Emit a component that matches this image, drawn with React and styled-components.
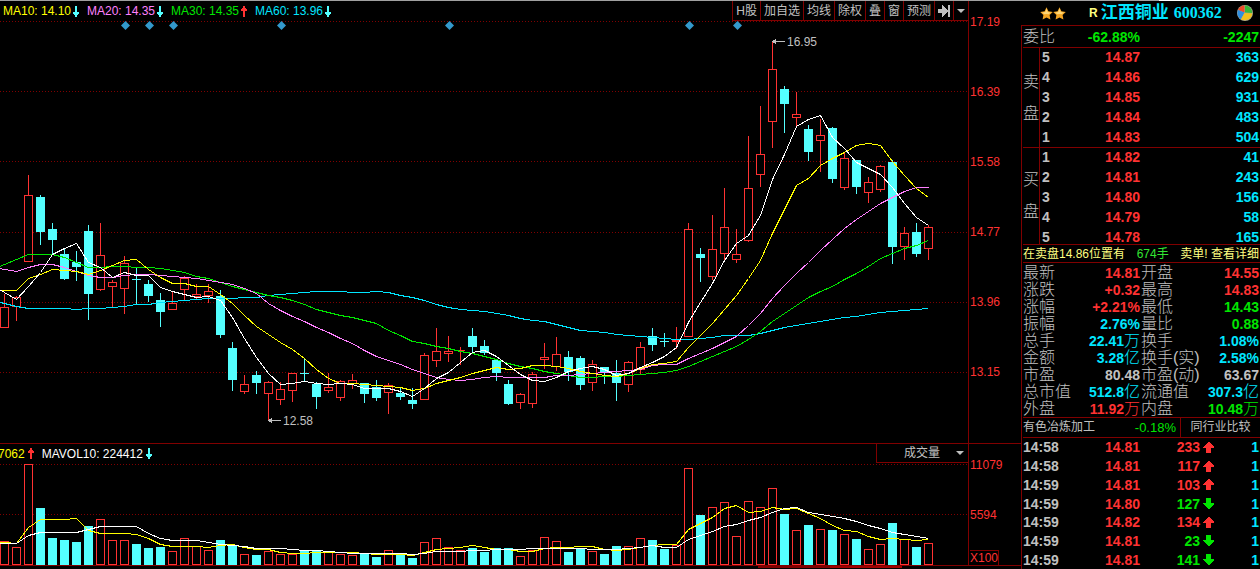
import { useState } from 'react';
import styled, { createGlobalStyle } from 'styled-components';

const colors = {
	red: '#ff3232',
	green: '#00e600',
	cyan: '#00e6ff',
	candle: '#54ffff',
	yellow: '#ffff00',
	pale: '#ffff80',
	pink: '#ff80ff',
	grey: '#c0c0c0',
	white: '#ffffff',
	line: '#800000',
};

// kind (r = rise, f = fall), high, body top, body bottom, low
const candles = [
	['r', 294, 307, 327, 327], ['r', 296, 297, 306, 320], ['r', 175, 195, 261, 261], ['f', 195, 197, 231, 244],
	['f', 223, 229, 239, 253], ['f', 249, 254, 278, 279], ['f', 251, 262, 266, 280], ['f', 225, 231, 293, 319],
	['r', 223, 255, 289, 290], ['r', 280, 282, 286, 306], ['r', 256, 263, 288, 313], ['f', 267, 279, 279, 303],
	['f', 280, 284, 295, 301], ['f', 293, 300, 311, 326], ['r', 292, 303, 309, 309], ['r', 276, 278, 289, 299],
	['r', 284, 294, 296, 298], ['r', 284, 291, 295, 302], ['f', 290, 296, 334, 337], ['f', 342, 348, 379, 390],
	['r', 375, 384, 391, 393], ['f', 371, 375, 382, 393], ['r', 381, 382, 393, 419], ['r', 382, 389, 399, 404],
	['r', 373, 373, 390, 401], ['f', 358, 373, 373, 380], ['f', 382, 384, 396, 408], ['r', 373, 387, 390, 392],
	['r', 380, 381, 397, 400], ['r', 374, 380, 383, 388], ['f', 383, 383, 393, 402], ['f', 380, 387, 397, 400],
	['r', 383, 385, 392, 413], ['f', 388, 393, 396, 399], ['f', 388, 400, 403, 408], ['r', 353, 355, 399, 399],
	['r', 328, 351, 360, 366], ['r', 336, 351, 353, 361], ['r', 347, 350, 350, 364], ['f', 328, 336, 346, 351],
	['f', 340, 346, 352, 354], ['f', 360, 360, 372, 380], ['f', 380, 384, 403, 404], ['r', 393, 394, 402, 408],
	['r', 372, 374, 403, 407], ['r', 343, 357, 359, 368], ['r', 337, 354, 366, 370], ['f', 351, 357, 371, 380],
	['f', 356, 358, 384, 389], ['r', 360, 364, 382, 390], ['f', 367, 367, 372, 383], ['f', 360, 373, 382, 400],
	['r', 361, 362, 384, 391], ['r', 342, 347, 369, 374], ['f', 328, 336, 344, 350], ['f', 333, 341, 341, 346],
	['r', 327, 340, 341, 348], ['r', 223, 229, 336, 336], ['f', 248, 254, 257, 281], ['r', 215, 249, 276, 279],
	['r', 188, 227, 253, 259], ['r', 229, 254, 259, 262], ['r', 136, 188, 240, 241], ['r', 106, 154, 174, 186],
	['r', 41, 69, 121, 147], ['f', 86, 89, 103, 132], ['r', 92, 114, 117, 126], ['f', 125, 129, 151, 160],
	['r', 119, 135, 140, 171], ['f', 127, 128, 178, 182], ['r', 152, 158, 187, 189], ['f', 160, 160, 186, 193],
	['r', 177, 182, 192, 202], ['r', 165, 166, 189, 191], ['f', 160, 162, 246, 263], ['r', 227, 233, 246, 259],
	['f', 223, 232, 253, 256], ['r', 225, 227, 248, 259],
];

const volumes = [
	541, 547, 464, 508, 538, 540, 542, 526, 519, 540, 540, 544, 548, 547, 551, 538, 546, 550, 540, 545,
	554, 555, 551, 554, 554, 550, 550, 552, 554, 555, 554, 557, 550, 555, 558, 542, 538, 547, 550, 548,
	552, 548, 548, 556, 550, 537, 541, 552, 548, 551, 554, 546, 546, 538, 540, 549, 545, 468, 515, 507,
	502, 536, 501, 507, 488, 514, 530, 525, 529, 530, 534, 539, 549, 544, 523, 539, 547, 543,
];

const averages = [
	{
		color: colors.cyan,
		values: [
			303, 306, 308, 308, 308, 308, 309, 308, 308, 307, 306, 304, 304, 302, 301, 300, 299, 298, 298, 298,
			297, 297, 295, 294, 293, 292, 291, 291, 291, 292, 292, 291, 292, 295, 297, 300, 304, 307, 309, 310,
			311, 313, 315, 318, 320, 321, 324, 327, 330, 331, 332, 334, 335, 336, 337, 338, 339, 339, 338, 337,
			335, 335, 335, 333, 330, 327, 325, 323, 321, 319, 317, 316, 314, 312, 311, 310, 309, 308,
		],
	},
	{
		color: colors.green,
		values: [
			264, 259, 254, 254, 254, 257, 262, 267, 267, 266, 266, 267, 267, 268, 270, 272, 276, 278, 282, 286,
			289, 292, 295, 297, 300, 304, 309, 312, 315, 317, 320, 323, 330, 335, 341, 343, 346, 348, 351, 353,
			356, 359, 363, 366, 368, 371, 373, 375, 377, 377, 376, 376, 375, 374, 373, 372, 370, 366, 361, 356,
			351, 346, 339, 331, 321, 313, 305, 297, 291, 286, 279, 273, 266, 258, 253, 248, 245, 240,
		],
	},
	{
		color: colors.pink,
		values: [
			269, 271, 267, 264, 264, 267, 271, 275, 277, 277, 275, 274, 274, 275, 276, 277, 278, 280, 282, 284,
			288, 293, 303, 310, 316, 321, 327, 332, 338, 343, 350, 356, 360, 364, 369, 373, 377, 379, 380, 379,
			377, 376, 377, 377, 377, 377, 375, 375, 374, 373, 372, 371, 370, 369, 365, 364, 364, 358, 353, 348,
			342, 336, 325, 313, 298, 285, 273, 262, 250, 239, 228, 219, 211, 203, 197, 191, 187, 187,
		],
	},
	{
		color: colors.yellow,
		values: [
			290, 290, 278, 274, 269, 270, 271, 274, 270, 265, 260, 259, 269, 277, 283, 283, 286, 286, 294, 303,
			315, 326, 334, 342, 349, 358, 369, 378, 383, 383, 384, 385, 386, 387, 390, 388, 383, 380, 377, 373,
			370, 367, 369, 368, 365, 365, 366, 368, 371, 373, 375, 376, 373, 368, 364, 363, 361, 347, 335, 323,
			309, 295, 278, 260, 233, 209, 185, 178, 165, 158, 152, 145, 143, 145, 161, 175, 188, 197,
		],
	},
	{
		color: colors.white,
		values: [
			292, 299, 286, 272, 254, 248, 243, 262, 267, 277, 272, 275, 275, 287, 291, 294, 297, 296, 300, 317,
			338, 357, 373, 384, 383, 381, 383, 384, 383, 384, 388, 388, 388, 391, 396, 388, 378, 372, 362, 352,
			350, 356, 365, 374, 380, 381, 377, 371, 368, 366, 369, 375, 373, 367, 362, 356, 347, 322, 302, 283,
			260, 243, 235, 215, 179, 154, 126, 119, 115, 137, 148, 162, 168, 174, 187, 203, 217, 225,
		],
	},
];

const volumeAverages = [
	{
		color: colors.yellow,
		values: [
			542, 543, 527, 519, 519, 519, 518, 530, 533, 533, 533, 534, 538, 544, 546, 546, 546, 547, 545, 544,
			547, 549, 549, 552, 553, 553, 552, 552, 552, 552, 553, 554, 554, 554, 555, 552, 549, 548, 547, 545,
			547, 549, 549, 551, 551, 548, 547, 547, 546, 546, 549, 550, 549, 547, 545, 544, 544, 529, 523, 517,
			508, 505, 512, 511, 507, 509, 508, 513, 518, 525, 530, 531, 536, 539, 538, 539, 540, 539,
		],
	},
	{
		color: colors.white,
		values: [
			543, 543, 535, 532, 532, 532, 532, 529, 526, 526, 526, 526, 533, 538, 540, 540, 540, 542, 544, 545,
			546, 548, 548, 548, 549, 550, 550, 551, 552, 553, 553, 553, 553, 553, 554, 553, 551, 551, 551, 550,
			550, 549, 549, 549, 548, 548, 548, 548, 548, 549, 549, 549, 548, 547, 545, 547, 547, 539, 535, 531,
			526, 524, 520, 517, 512, 508, 507, 512, 514, 516, 518, 521, 525, 528, 532, 534, 536, 538,
		],
	},
];

const maLegend = [
	{ text: 'MA10: 14.10', color: colors.yellow, up: false },
	{ text: 'MA20: 14.35', color: colors.pink, up: false },
	{ text: 'MA30: 14.35', color: colors.green, up: true },
	{ text: 'MA60: 13.96', color: colors.cyan, up: false },
];

const tools = ['H股', '加自选', '均线', '除权', '叠', '窗', '预测'];

const sells = [['5', '14.87', '363'], ['4', '14.86', '629'], ['3', '14.85', '931'], ['2', '14.84', '483'], ['1', '14.83', '504']];
const buys = [['1', '14.82', '41'], ['2', '14.81', '243'], ['3', '14.80', '156'], ['4', '14.79', '58'], ['5', '14.78', '165']];

// label, value, unit, color, twice per row
const quotes = [
	['最新', '14.81', '', 'red', '开盘', '14.55', '', 'red'],
	['涨跌', '+0.32', '', 'red', '最高', '14.83', '', 'red'],
	['涨幅', '+2.21%', '', 'red', '最低', '14.43', '', 'green'],
	['振幅', '2.76%', '', 'cyan', '量比', '0.88', '', 'green'],
	['总手', '22.41', '万', 'cyan', '换手', '1.08%', '', 'cyan'],
	['金额', '3.28', '亿', 'cyan', '换手(实)', '2.58%', '', 'cyan'],
	['市盈', '80.48', '', 'grey', '市盈(动)', '63.67', '', 'grey'],
	['总市值', '512.8', '亿', 'cyan', '流通值', '307.3', '亿', 'cyan'],
	['外盘', '11.92', '万', 'red', '内盘', '10.48', '万', 'green'],
];

const trades = [
	['14:58', '14.81', '233', true],
	['14:58', '14.81', '117', true],
	['14:59', '14.81', '103', true],
	['14:59', '14.80', '127', false],
	['14:59', '14.82', '134', true],
	['14:59', '14.81', '23', false],
	['14:59', '14.81', '141', false],
];

const centerOf = (i) => 4 + i * 12;

function Trend({ up }) {
	return (
		<svg width='6' height='11' shapeRendering='crispEdges' fill={up ? colors.red : colors.candle}>
			<path d={up ? 'M2 0h2v2h1v1h1v2h-2v6h-2v-6h-2v-2h1v-1h1z' : 'M2 0h2v6h2v2h-1v1h-1v2h-2v-2h-1v-1h-1v-2h2z'} />
		</svg>
	);
}

function AverageLine({ color, values }) {
	const all = [2 * values[0] - values[1], ...values];
	const points = all.map((y, i) => `${centerOf(i - 1) + 0.5},${y + 0.5}`).join(' ');
	return <polyline points={points} fill='none' stroke={color} />;
}

function Bar({ x, top, bottom, kind }) {
	if (kind === 'f' || bottom - top < 2) {
		return <rect x={x - 4} y={top} width='9' height={bottom - top + 1} fill={kind === 'f' ? colors.candle : colors.red} />;
	}
	return <rect x={x - 3.5} y={top + 0.5} width='8' height={bottom - top} fill='#000' stroke={colors.red} />;
}

function PriceChart() {
	return (
		<Plot viewBox='0 21 968 422' preserveAspectRatio='xMaxYMin meet' shapeRendering='crispEdges'>
			{[21, 91, 161, 232, 302, 372].map((y) => (
				<path key={y} d={`M0 ${y + 0.5}H968`} stroke={colors.line} strokeDasharray='1 2' />
			))}
			{[125, 149, 173, 281, 449, 689, 737].map((x) => (
				<path key={x} d={`M${x + 0.5} 21l4.5 4.5l-4.5 4.5l-4.5 -4.5z`} fill='#3399cc' shapeRendering='auto' />
			))}
			{candles.map(([kind, high, top, bottom, low], i) => (
				<g key={i}>
					<rect x={centerOf(i)} y={high} width='1' height={low - high + 1} fill={kind === 'f' ? colors.candle : colors.red} />
					<Bar x={centerOf(i)} top={top} bottom={bottom} kind={kind} />
				</g>
			))}
			{averages.map((line) => (
				<AverageLine key={line.color} {...line} />
			))}
			<g fill={colors.grey}>
				<path d='M772 41h1v-1h2v-1h1v2h9v1h-9v2h-1v-1h-2v-1h-1z' />
				<text x='787' y='46'>16.95</text>
				<path d='M268 420h1v-1h2v-1h1v2h9v1h-9v2h-1v-1h-2v-1h-1z' />
				<text x='283' y='425'>12.58</text>
			</g>
		</Plot>
	);
}

function VolumeChart() {
	return (
		<Plot viewBox='0 463 968 102' preserveAspectRatio='xMaxYMin meet' shapeRendering='crispEdges'>
			{[464, 514].map((y) => (
				<path key={y} d={`M0 ${y + 0.5}H968`} stroke={colors.line} strokeDasharray='1 2' />
			))}
			{volumes.map((top, i) => (
				<Bar key={i} x={centerOf(i)} top={top} bottom={564} kind={candles[i][0]} />
			))}
			{volumeAverages.map((line) => (
				<AverageLine key={line.color} {...line} />
			))}
		</Plot>
	);
}

function Depth({ title, rows }) {
	return (
		<DepthBlock>
			<DepthTitle>
				{title.split('').map((char) => (
					<span key={char}>{char}</span>
				))}
			</DepthTitle>
			<DepthTable>
				<tbody>
					{rows.map(([level, price, amount]) => (
						<tr key={level}>
							<Cell $color='grey' $left>{level}</Cell>
							<Cell $color='red'>{price}</Cell>
							<Cell $color='cyan'>{amount}</Cell>
						</tr>
					))}
				</tbody>
			</DepthTable>
		</DepthBlock>
	);
}

function Star() {
	return (
		<svg width='13' height='13' viewBox='0 0 13 13'>
			<path d='M6.500 0.300L8.400 4.300L12.800 4.900L9.600 8L10.400 12.500L6.500 10.400L2.600 12.500L3.400 8L0.200 4.900L4.600 4.300Z' fill='#f5a623' />
			<path d='M6.500 1.800L7.800 5L11 5.500L8.500 7.200L6.500 7L4.300 7.200L2 5.500L5.200 5Z' fill='#ffd778' />
		</svg>
	);
}

function Pie() {
	return (
		<svg width='16' height='16' viewBox='0 0 16 16'>
			<circle cx='8' cy='8' r='8' fill='#a8a890' />
			<path d='M7.500 7.500V0.500A7.500 7.500 0 0 0 1 5Z' fill='#f04a28' />
			<path d='M7.500 7.500L1 5A7.500 7.500 0 0 0 4 14.300Z' fill='#2f8fe0' />
			<path d='M7.500 8L4 14.300A7.500 7.500 0 0 0 15.300 8.500Z' fill='#f2c01c' />
			<path d='M8 7.500V0.500A7.500 7.500 0 0 1 15.300 8Z' fill='#38b838' />
		</svg>
	);
}

export default function App() {
	const [indicator, setIndicator] = useState('vol');
	return (
		<Page>
			<GlobalStyle />
			<TopLine />
			<Charts>
				<Pane>
					<div>
						<PaneHead>
							<Legend>
								{maLegend.map(({ text, color, up }) => (
									<LegendItem key={text} $color={color}>
										{text}
										<Trend up={up} />
									</LegendItem>
								))}
							</Legend>
							<Toolbar>
								{tools.map((tool) => (
									<ToolButton key={tool}>{tool}</ToolButton>
								))}
								<ToolButton aria-label='Last bar'>
									<svg width='12' height='12' fill={colors.grey} shapeRendering='crispEdges'>
										<path d='M0 4h4v-4l6 6l-6 6v-4h-4zM10 0h2v12h-2z' />
									</svg>
								</ToolButton>
								<ToolButton aria-label='More'>
									<Caret />
								</ToolButton>
							</Toolbar>
						</PaneHead>
						<PriceChart />
					</div>
					<Axis $step={70}>
						{['17.19', '16.39', '15.58', '14.77', '13.96', '13.15'].map((price) => (
							<span key={price}>{price}</span>
						))}
					</Axis>
				</Pane>
				<Pane $line>
					<div>
						<PaneHead $short>
							<Legend $cut>
								<LegendItem $color={colors.yellow} $tight>
									7062
									<Trend up />
								</LegendItem>
								<LegendItem $color={colors.white} $tight>
									MAVOL10: 224412
									<Trend />
								</LegendItem>
							</Legend>
							<Picker>
								<select aria-label='Indicator' value={indicator} onChange={(e) => setIndicator(e.target.value)}>
									<option value='vol'>成交量</option>
								</select>
								<Caret />
							</Picker>
						</PaneHead>
						<VolumeChart />
					</div>
					<Axis $step={50}>
						<span>11079</span>
						<span>5594</span>
						<Unit>X100</Unit>
					</Axis>
				</Pane>
				<ScrollTrack>
					<ScrollPart $grow={758} />
					<ScrollPart $grow={72} $color='#800000' />
					<ScrollPart $grow={72} $color='#a00000' />
					<ScrollPart $grow={119} />
				</ScrollTrack>
			</Charts>

			<Side>
				<StockHead>
					<Stars>
						<Star />
						<Star />
					</Stars>
					<Mark>R</Mark>
					<StockName>江西铜业</StockName>
					<StockCode>600362</StockCode>
					<Pie />
				</StockHead>
				<Panel>
					<Ratio>
						<span>委比</span>
						<Num $color='green'>-62.88%</Num>
						<Num $color='green'>-2247</Num>
					</Ratio>
					<Depth title='卖盘' rows={sells} />
					<Depth title='买盘' rows={buys} />
					<Notice>
						<span>在卖盘14.86位置有</span>
						<Hands>674手</Hands>
						<a href='#detail'>卖单! 查看详细</a>
					</Notice>
					<QuoteTable>
						<tbody>
							{quotes.map(([a, av, au, ac, b, bv, bu, bc]) => (
								<tr key={a}>
									<QuoteLabel scope='row'>{a}</QuoteLabel>
									<Cell $color={ac}>{av}<small>{au}</small></Cell>
									<QuoteLabel scope='row'>{b}</QuoteLabel>
									<Cell $color={bc}>{bv}<small>{bu}</small></Cell>
								</tr>
							))}
						</tbody>
					</QuoteTable>
					<Industry>
						<span>有色冶炼加工</span>
						<Change>-0.18%</Change>
						<CompareButton>同行业比较</CompareButton>
					</Industry>
					<Trades>
						{trades.map(([time, price, amount, up], i) => (
							<Trade key={i}>
								<Num $color='grey' $left>{time}</Num>
								<Num $color='red'>{price}</Num>
								<Num $color={up ? 'red' : 'green'}>{amount}</Num>
								<svg width='11' height='11' fill={up ? colors.red : colors.green} shapeRendering='crispEdges'>
									<path d={up ? 'M5 0h1l5 5v1h-3v5h-5v-5h-3v-1z' : 'M5 11h1l5 -5v-1h-3v-5h-5v5h-3v1z'} />
								</svg>
								<Num $color='cyan'>1</Num>
							</Trade>
						))}
					</Trades>
				</Panel>
			</Side>
		</Page>
	);
}

const GlobalStyle = createGlobalStyle`
	* {
		box-sizing: border-box;
	}
	body {
		margin: 0;
		background: #000;
		color: ${colors.grey};
		font: 12px/14px 'Liberation Sans', 'Noto Sans CJK SC', sans-serif;
	}
	button, select {
		margin: 0;
		border: 0;
		border-radius: 0;
		background: none;
		color: inherit;
		font: inherit;
		cursor: pointer;
	}
	svg {
		display: block;
		flex: none;
	}
`;

const Page = styled.main`
	display: grid;
	grid-template-columns: minmax(0, 1fr) 239px;
	grid-template-rows: 1px 1fr;
	min-height: 100vh;
`;

const TopLine = styled.div`
	grid-column: 1 / -1;
	background: linear-gradient(to right, #a0a0a0 92%, #ffffff 92%);
`;

const Charts = styled.section`
	display: flex;
	flex-direction: column;
`;

const Pane = styled.div`
	display: grid;
	grid-template-columns: minmax(0, 1fr) 53px;
	border-top: ${({ $line }) => ($line ? `1px solid ${colors.line}` : 0)};
`;

const PaneHead = styled.header`
	display: flex;
	justify-content: space-between;
	height: ${({ $short }) => ($short ? '19px' : '20px')};
`;

const Legend = styled.div`
	display: flex;
	align-items: center;
	gap: ${({ $cut }) => ($cut ? '8px' : 0)};
	margin-left: ${({ $cut }) => ($cut ? '-2px' : '3px')};
	white-space: nowrap;
`;

const LegendItem = styled.span`
	display: flex;
	align-items: center;
	gap: ${({ $tight }) => ($tight ? '3px' : '2px')};
	width: ${({ $tight }) => ($tight ? 'auto' : '84px')};
	color: ${({ $color }) => $color};
`;

const Toolbar = styled.nav`
	display: flex;
	border-bottom: 1px solid ${colors.line};
`;

const ToolButton = styled.button`
	display: flex;
	align-items: center;
	padding: 0 3px;
	border-left: 1px solid ${colors.line};
	white-space: nowrap;
`;

const Caret = styled.i`
	border: 4px solid transparent;
	border-top-color: ${colors.grey};
	border-bottom: 0;
	pointer-events: none;
`;

const Picker = styled.label`
	display: flex;
	align-items: center;
	width: 92px;
	padding-right: 4px;
	border: solid ${colors.line};
	border-width: 0 0 1px 1px;
	select {
		flex: 1;
		height: 18px;
		padding: 0 0 0 27px;
		appearance: none;
		outline: none;
	}
`;

const Plot = styled.svg`
	width: 100%;
	height: auto;
`;

const Axis = styled.div`
	display: flex;
	flex-direction: column;
	padding: 14px 0 0 1px;
	border-left: 1px solid ${colors.line};
	color: ${colors.red};
	span {
		height: ${({ $step }) => $step}px;
	}
	span:last-of-type {
		height: auto;
	}
`;

const Unit = styled.div`
	align-self: flex-start;
	margin-top: auto;
	border: solid ${colors.line};
	border-width: 1px 1px 0 0;
`;

const ScrollTrack = styled.div`
	display: flex;
	height: 4px;
	border-top: 1px solid ${colors.line};
`;

const ScrollPart = styled.i`
	flex: ${({ $grow }) => $grow};
	height: 2px;
	background: ${({ $color }) => $color || 'none'};
`;

const Side = styled.aside`
	display: flex;
	flex-direction: column;
`;

const StockHead = styled.header`
	display: flex;
	align-items: center;
	height: 24px;
	padding: 0 7px 0 19px;
	svg:last-child {
		margin-left: auto;
	}
`;

const Stars = styled.span`
	display: flex;
	margin-right: 23px;
`;

const Mark = styled.b`
	margin-right: 3px;
	color: ${colors.pale};
`;

const StockName = styled.h1`
	margin: 0 5px 0 0;
	color: ${colors.cyan};
	font-size: 17px;
	line-height: 24px;
`;

const StockCode = styled.b`
	color: ${colors.cyan};
	font-family: 'Liberation Serif', serif;
	font-size: 16px;
`;

const Panel = styled.div`
	display: flex;
	flex: 1;
	flex-direction: column;
	padding-left: 1px;
	border: solid ${colors.line};
	border-width: 1px 0 0 1px;
`;

const Num = styled.b`
	color: ${({ $color }) => colors[$color]};
	font-size: 14px;
	font-weight: 700;
	text-align: ${({ $left }) => ($left ? 'left' : 'right')};
`;

const Cell = styled.td`
	padding: ${({ $left }) => ($left ? '0 0 0 2px' : '0 1px 0 0')};
	color: ${({ $color }) => colors[$color]};
	font-size: 14px;
	font-weight: 700;
	text-align: ${({ $left }) => ($left ? 'left' : 'right')};
	white-space: nowrap;
	small {
		font-size: 16px;
		font-weight: 300;
	}
`;

const Ratio = styled.div`
	display: grid;
	grid-template-columns: 33px 84px 1fr;
	align-items: center;
	height: 21px;
	padding-right: 1px;
	font-size: 16px;
	font-weight: 300;
`;

const DepthBlock = styled.section`
	display: grid;
	grid-template: 100% / 17px 1fr;
	height: 100px;
	border-top: 1px solid ${colors.line};
	& + & {
		height: 97px;
	}
`;

const DepthTitle = styled.h2`
	display: flex;
	flex-direction: column;
	justify-content: center;
	gap: 16px;
	margin: 0;
	border-right: 1px solid ${colors.line};
	font-size: 16px;
	font-weight: 300;
	line-height: 16px;
`;

const DepthTable = styled.table`
	width: 100%;
	height: 100px;
	margin-top: -1px;
	border-collapse: collapse;
	table-layout: fixed;
	td {
		height: 20px;
		line-height: 18px;
	}
	td:first-child {
		width: 20px;
	}
	td:nth-child(2) {
		width: 81px;
	}
`;

const Notice = styled.div`
	display: flex;
	justify-content: space-between;
	align-items: center;
	height: 19px;
	padding-right: 1px;
	border: solid ${colors.line};
	border-width: 1px 0;
	color: ${colors.pale};
	white-space: nowrap;
	a {
		color: inherit;
		text-decoration: none;
	}
`;

const Hands = styled.span`
	color: #32e632;
`;

const QuoteTable = styled.table`
	width: 100%;
	margin-top: 1px;
	border-collapse: collapse;
	table-layout: fixed;
	line-height: 14px;
	th:first-child {
		width: 49px;
	}
	td:nth-child(2) {
		width: 69px;
	}
	th:nth-child(3) {
		width: 57px;
	}
	td {
		height: 17px;
	}
`;

const QuoteLabel = styled.th`
	padding: 0;
	font-size: 16px;
	font-weight: 300;
	text-align: left;
	white-space: nowrap;
`;

const Industry = styled.div`
	display: flex;
	align-items: stretch;
	height: 21px;
	border: solid ${colors.line};
	border-width: 1px 0;
	line-height: 19px;
`;

const Change = styled.span`
	margin-left: auto;
	padding-right: 4px;
	color: ${colors.green};
	font-size: 13px;
`;

const CompareButton = styled.button`
	width: 80px;
	padding: 0;
	border-left: 1px solid ${colors.line};
`;

const Trades = styled.div`
	display: flex;
	flex: 1;
	flex-direction: column;
`;

const Trade = styled.div`
	display: grid;
	flex: 1;
	grid-template-columns: 48px 69px 60px 14px 1fr;
	align-items: center;
	padding-right: 1px;
	svg {
		justify-self: end;
	}
`;
